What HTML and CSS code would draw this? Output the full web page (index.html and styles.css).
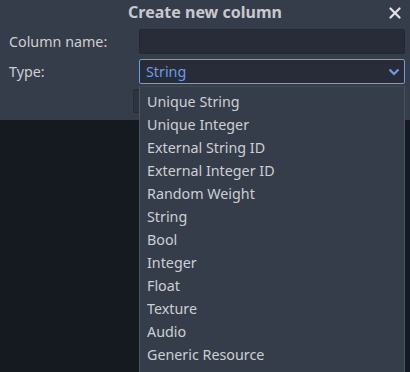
FILE: index.html
```html
<!DOCTYPE html>
<html>
<head>
    <meta charset="utf-8">
    <title>Create new column</title>
    <link rel="stylesheet" href="styles.css">
</head>
<body>
    <div class="dialog">
        <div class="title_bar">
            <span></span>
            <span class="title">Create new column</span>
            <span class="close_btn">
                <svg width="12" height="12" viewBox="0 0 12 12">
                    <path d="M1.5 1.5 L10.5 10.5 M10.5 1.5 L1.5 10.5" stroke="#e2e4e7" stroke-width="2.2" stroke-linecap="round"/>
                </svg>
            </span>
        </div>
        <div class="form_row">
            <label class="field_label" for="column_name">Column name:</label>
            <input class="text_input" type="text" id="column_name">
        </div>
        <div class="form_row">
            <label class="field_label">Type:</label>
            <div class="select_box">
                <span>String</span>
                <svg width="12" height="8" viewBox="0 0 12 8">
                    <path d="M1.5 1.5 L6 6 L10.5 1.5" fill="none" stroke="#6a9de6" stroke-width="2.2"/>
                </svg>
            </div>
        </div>
        <div class="button_row">
            <button class="ok_btn"></button>
        </div>
    </div>

    <!-- open dropdown -->
    <ul class="popup_menu">
        <li>Unique String</li>
        <li>Unique Integer</li>
        <li>External String ID</li>
        <li>External Integer ID</li>
        <li>Random Weight</li>
        <li>String</li>
        <li>Bool</li>
        <li>Integer</li>
        <li>Float</li>
        <li>Texture</li>
        <li>Audio</li>
        <li>Generic Resource</li>
    </ul>
</body>
</html>
```

FILE: styles.css
```css
body {
    margin: 0;
    height: 372px;
    overflow: hidden;
    background-color: #151920;
    font-family: "Noto Sans", "DejaVu Sans", sans-serif;
    font-size: 14.3px;
    color: #cdcfd3;
}

.dialog {
    height: 120px;
    background-color: #363d4a;
    box-sizing: border-box;
}

.title_bar {
    display: grid;
    grid-template-columns: 1fr auto 1fr;
    align-items: center;
    height: 27px;
}

.title {
    font-weight: bold;
    font-size: 16px;
    color: #c6c9ce;
    margin-bottom: 3px;
}

.close_btn {
    justify-self: end;
    margin-right: 9px;
    margin-bottom: 2px;
    display: flex;
}

.form_row {
    display: flex;
    align-items: center;
    margin-top: 2px;
    margin-bottom: 5px;
}

.field_label {
    width: 139px;
    padding-left: 9px;
    box-sizing: border-box;
}

.text_input {
    width: 266px;
    height: 25px;
    box-sizing: border-box;
    margin: 0;
    background-color: #272c38;
    border: 1px solid #232833;
    border-radius: 2px;
}

.select_box {
    width: 266px;
    height: 25px;
    box-sizing: border-box;
    display: flex;
    align-items: center;
    justify-content: space-between;
    padding: 0 4px 0 6px;
    background-color: #272c38;
    border: 1px solid #6a9de6;
    border-radius: 2px;
    color: #6a9de6;
}

.button_row {
    padding-left: 133px;
    margin-top: 4px;
}

.ok_btn {
    width: 60px;
    height: 24px;
    background-color: #2d3340;
    border: 1px solid #262b36;
    border-radius: 2px;
}

.popup_menu {
    position: absolute;
    left: 139px;
    top: 86px;
    width: 266px;
    height: 300px;
    box-sizing: border-box;
    margin: 0;
    padding: 3px 0 0 0;
    list-style: none;
    background-color: #363d4a;
    border: 1px solid #4d5462;
    border-top-color: #404755;
}

.popup_menu li {
    height: 23px;
    line-height: 23px;
    padding-left: 7px;
}
```
